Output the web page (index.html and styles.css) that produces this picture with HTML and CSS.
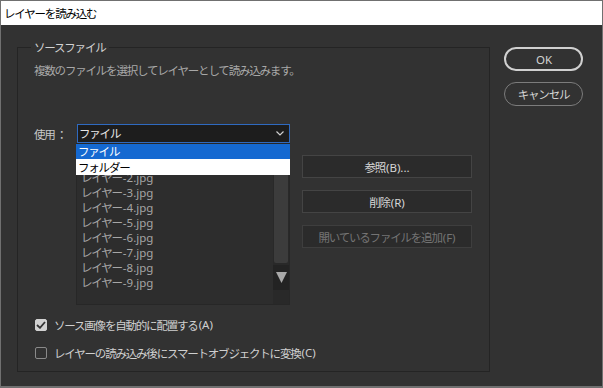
FILE: index.html
```html
<!DOCTYPE html>
<html lang="ja">
<head>
    <meta charset="UTF-8">
    <title>レイヤーを読み込む</title>
    <link rel="stylesheet" href="styles.css">
</head>
<body>
    <div class="Ventana">
        <div class="Titulo">レイヤーを読み込む</div>

        <div class="Dialogo">
            <fieldset class="Grupo">
                <legend>ソースファイル</legend>
                <p class="Desc">複数のファイルを選択してレイヤーとして読み込みます。</p>

                <div class="Fila">
                    <span class="Etiqueta">使用 ：</span>

                    <div class="Col-Lista">
                        <div class="Selector">
                            <span>ファイル</span>
                            <svg class="Chevron" width="8" height="5" viewBox="0 0 8 5">
                                <path d="M0.5 0.5 L4 4 L7.5 0.5" fill="none" stroke="#cfcfcf" stroke-width="1.2"/>
                            </svg>
                        </div>

                        <div class="Lista">
                            <ul class="Items">
                                <li>レイヤー<span class="Lat">-1.jpg</span></li>
                                <li>レイヤー<span class="Lat">-2.jpg</span></li>
                                <li>レイヤー<span class="Lat">-3.jpg</span></li>
                                <li>レイヤー<span class="Lat">-4.jpg</span></li>
                                <li>レイヤー<span class="Lat">-5.jpg</span></li>
                                <li>レイヤー<span class="Lat">-6.jpg</span></li>
                                <li>レイヤー<span class="Lat">-7.jpg</span></li>
                                <li>レイヤー<span class="Lat">-8.jpg</span></li>
                                <li>レイヤー<span class="Lat">-9.jpg</span></li>
                            </ul>
                            <div class="Scroll">
                                <div class="Thumb"></div>
                                <div class="Flecha">
                                    <svg width="11" height="11" viewBox="0 0 11 11">
                                        <path d="M0 0 H11 L5.5 11 Z" fill="#a9a9a9"/>
                                    </svg>
                                </div>
                            </div>
                        </div>

                        <div class="Menu">
                            <div class="Opcion Activa">ファイル</div>
                            <div class="Opcion">フォルダー</div>
                        </div>
                    </div>

                    <div class="Botones">
                        <button class="Boton">参照<span class="Lat">(B)...</span></button>
                        <button class="Boton">削除<span class="Lat">(R)</span></button>
                        <button class="Boton Inactivo">開いているファイルを追加<span class="Lat">(F)</span></button>
                    </div>
                </div>

                <div class="Checks">
                    <label class="Check"><span class="Caja Marcada">
                        <svg width="10" height="8" viewBox="0 0 10 8">
                            <path d="M1 4 L4 6.8 L9 1" fill="none" stroke="#333" stroke-width="1.8"/>
                        </svg>
                    </span>ソース画像を自動的に配置する<span class="Lat">(A)</span></label>
                    <label class="Check"><span class="Caja"></span>レイヤーの読み込み後にスマートオブジェクトに変換<span class="Lat">(C)</span></label>
                </div>
            </fieldset>

            <div class="Acciones">
                <button class="Pildora Principal"><span class="Lat">OK</span></button>
                <button class="Pildora">キャンセル</button>
            </div>
        </div>
    </div>
</body>
</html>
```

FILE: styles.css
```css
html, body {
    margin: 0;
    height: 100%;
}

body {
    background: #707070;
    font-family: "Noto Sans CJK JP", "Noto Sans", sans-serif;
    font-size: 11.5px;
    letter-spacing: -1.2px;
}

.Lat {
    letter-spacing: 0;
    font-family: "Noto Sans", "Noto Sans CJK JP", sans-serif;
    font-size: 11.5px;
    margin-left: 1px;
}

.Ventana {
    position: absolute;
    top: 1px;
    left: 1px;
    width: 601px;
    height: 385px;
    background: #323232;
    display: flex;
    flex-direction: column;
}

.Titulo {
    height: 24px;
    line-height: 24px;
    padding-left: 3px;
    background: #ffffff;
    color: #000;
}

.Dialogo {
    display: flex;
    align-items: flex-start;
    padding: 14px 0 0 16px;
}

.Grupo {
    margin: 0;
    width: 473px;
    box-sizing: border-box;
    border: 1px solid #242424;
    padding: 0 0 10px 16px;
}

.Grupo legend {
    margin-left: -3px;
    padding: 0 3px;
    line-height: 16px;
    color: #d2d2d2;
}

.Desc {
    margin: 7px 0 0;
    line-height: 16px;
    color: #a8a8a8;
}

.Fila {
    display: flex;
    align-items: flex-start;
    margin-top: 46px;
}

.Etiqueta {
    width: 42px;
    line-height: 20px;
    color: #c8c8c8;
}

.Col-Lista {
    position: relative;
    width: 214px;
}

.Selector {
    margin-left: 1px;
    height: 19px;
    box-sizing: border-box;
    border: 1px solid #2f6ac0;
    background: #1d1d1d;
    color: #e6e6e6;
    display: flex;
    align-items: center;
    justify-content: space-between;
    padding: 0 4px 0 1px;
    line-height: 17px;
}

.Chevron {
    margin-right: 1px;
}

.Lista {
    height: 162px;
    box-sizing: border-box;
    border: 1px solid #272727;
    background: #2d2d2d;
    display: flex;
    overflow: hidden;
}

.Items {
    flex: 1;
    margin: 0;
    padding: 11px 0 0 4px;
    list-style: none;
    color: #a6a6a6;
    line-height: 15px;
}

.Scroll {
    width: 16px;
    background: #292929;
    display: flex;
    flex-direction: column;
}

.Thumb {
    height: 117px;
    margin: 2px 1px;
    background: #3c3c3c;
    border-radius: 2px;
}

.Flecha {
    height: 25px;
    background: #232323;
    display: flex;
    align-items: center;
    justify-content: center;
}

.Menu {
    position: absolute;
    top: 20px;
    left: 0;
    width: 214px;
}

.Opcion {
    height: 16px;
    line-height: 16px;
    padding-left: 2px;
    background: #fff;
    color: #000;
}

.Opcion.Activa {
    height: 15px;
    line-height: 15px;
    background: #1569d1;
    color: #fff;
}

.Botones {
    display: flex;
    flex-direction: column;
    gap: 12px;
    margin: 31px 0 0 12px;
    width: 170px;
}

.Boton {
    height: 23px;
    font-family: inherit;
    font-size: inherit;
    letter-spacing: inherit;
    color: #d6d6d6;
    background: #2b2b2b;
    border: 1px solid #444444;
    padding: 0;
}

.Boton.Inactivo {
    color: #747474;
    border-color: #3e3e3e;
}

.Checks {
    display: flex;
    flex-direction: column;
    gap: 12px;
    margin-top: 12px;
}

.Check {
    display: flex;
    align-items: center;
    line-height: 16px;
    color: #cfcfcf;
}

.Caja {
    width: 12px;
    height: 12px;
    box-sizing: border-box;
    margin: 0 7px 0 1px;
    border: 1px solid #8a8a8a;
    border-radius: 2px;
    display: flex;
    align-items: center;
    justify-content: center;
}

.Caja.Marcada {
    background: #d2d2d2;
    border-color: #d2d2d2;
}

.Acciones {
    display: flex;
    flex-direction: column;
    gap: 11px;
    margin: 8px 0 0 14px;
}

.Pildora {
    width: 79px;
    height: 24px;
    border-radius: 12px;
    background: transparent;
    border: 1px solid #7c7c7c;
    color: #d4d4d4;
    font-family: inherit;
    font-size: inherit;
    letter-spacing: inherit;
    padding: 0;
}

.Pildora.Principal {
    border: 2px solid #d0d0d0;
}
```
